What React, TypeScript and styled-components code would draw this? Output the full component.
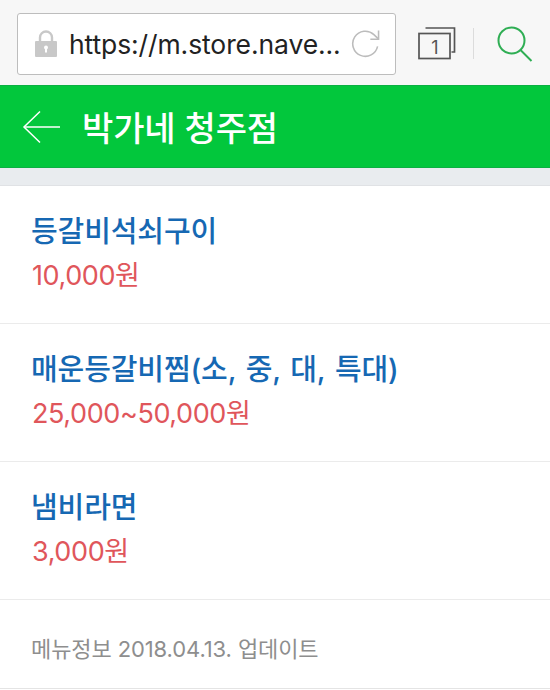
import React from "react";
import styled, { createGlobalStyle } from "styled-components";

const GlobalStyle = createGlobalStyle`
  html, body {
    margin: 0;
    padding: 0;
    background: #fff;
    overflow: hidden;
  }
  * {
    box-sizing: border-box;
  }
`;

const Page = styled.div`
  width: 550px;
  height: 690px;
  overflow: hidden;
  font-family: Inter, "Noto Sans CJK KR", sans-serif;
`;

const Toolbar = styled.div`
  display: flex;
  align-items: center;
  height: 85px;
  padding: 2px 0 0 17px;
  background: #f7f7f7;
`;

const AddressBar = styled.div`
  display: flex;
  flex-shrink: 0;
  align-items: center;
  width: 379px;
  height: 62px;
  padding: 0 15px 0 17px;
  background: #fff;
  border: 1px solid #bdbdbd;
  border-radius: 3px;
`;

const Url = styled.div`
  flex: 1;
  margin-left: 12px;
  font-size: 26.5px;
  letter-spacing: -0.1px;
  color: #222;
  white-space: nowrap;
`;

const ToolIcons = styled.div`
  display: flex;
  flex-shrink: 0;
  align-items: center;
  margin-left: 22px;
`;

const Divider = styled.div`
  width: 1px;
  height: 31px;
  margin: 0 23px 0 17px;
  background: #dcdcdc;
`;

const Header = styled.header`
  display: flex;
  align-items: center;
  height: 83px;
  padding: 0 22px;
  background: #02c73c;
  border-top: 1px solid #0bb043;
  border-bottom: 1px solid #0bb043;
`;

const Title = styled.h1`
  margin: 0 0 0 22px;
  font-size: 34px;
  font-weight: 500;
  letter-spacing: -0.1px;
  color: #fff;
`;

const Gap = styled.div`
  height: 18px;
  background: #e9ecef;
  border-bottom: 1px solid #e0e2e5;
`;

const MenuList = styled.ul`
  margin: 0;
  padding: 0;
  list-style: none;
`;

const MenuRow = styled.li`
  display: flex;
  flex-direction: column;
  justify-content: center;
  height: 138px;
  padding: 0 31px 1px;
  border-bottom: 1px solid #ebebeb;
`;

const MenuName = styled.div`
  font-size: 29px;
  font-weight: 500;
  line-height: 44px;
  letter-spacing: -0.1px;
  word-spacing: 2px;
  color: #1668b3;
`;

const MenuPrice = styled.div`
  margin-left: 1px;
  font-size: 27px;
  line-height: 44px;
  letter-spacing: -0.4px;
  color: #e0565b;
`;

const Footer = styled.div`
  height: 89px;
  padding: 33px 31px 0;
  font-size: 22px;
  line-height: 32px;
  letter-spacing: -0.1px;
  color: #8e8e8e;
  border-bottom: 1px solid #e4e4e4;
`;

const LockIcon = () => (
  <svg width="22" height="27" viewBox="0 0 22 27">
    <path d="M5 12V7.500a6 6 0 0 1 12 0V12" fill="none" stroke="#c8c8c8" strokeWidth="2.400" />
    <path d="M1 11h20a1 1 0 0 1 1 1v14a1 1 0 0 1-1 1H1a1 1 0 0 1-1-1V12a1 1 0 0 1 1-1z" fill="#c8c8c8" />
    <circle cx="11" cy="17.500" r="2" fill="#fff" />
    <rect x="10" y="18" width="2" height="4.500" fill="#fff" />
  </svg>
);

const ReloadIcon = () => (
  <svg width="29" height="29" viewBox="0 0 30 30" fill="none" stroke="#bcbcbc" strokeWidth="1.600">
    <path d="M27.500 18a13 13 0 1 1-3.800-12.200L28 10" />
    <path d="M28.500 1.500V10.500H20" />
  </svg>
);

const TabsIcon = () => (
  <svg width="38" height="33" viewBox="0 0 38 33" fill="none" stroke="#555" strokeWidth="1.700">
    <path d="M7.500 1h29v24h-3" />
    <rect x="1" y="6.500" width="31" height="25" />
    <text x="17" y="27" textAnchor="middle" fontFamily="Inter, sans-serif" fontSize="18" fill="#555" stroke="none">1</text>
  </svg>
);

const SearchIcon = () => (
  <svg width="36" height="36" viewBox="0 0 36 36" fill="none" stroke="#2fae54" strokeWidth="2">
    <circle cx="14.500" cy="14.500" r="13" />
    <path d="M23.500 24l11 11" />
  </svg>
);

const BackIcon = () => (
  <svg width="38" height="34" viewBox="0 0 38 34" fill="none" stroke="#fff" strokeWidth="1.500">
    <path d="M38 17H2" />
    <path d="M18 1.500L2 17l16 15.500" />
  </svg>
);

const menus = [
  { name: "등갈비석쇠구이", price: "10,000원" },
  { name: "매운등갈비찜(소, 중, 대, 특대)", price: "25,000~50,000원" },
  { name: "냄비라면", price: "3,000원" },
];

export default function App() {
  return (
    <Page>
      <GlobalStyle />
      <Toolbar>
        <AddressBar>
          <LockIcon />
          <Url>https://m.store.nave...</Url>
          <ReloadIcon />
        </AddressBar>
        <ToolIcons>
          <TabsIcon />
          <Divider />
          <SearchIcon />
        </ToolIcons>
      </Toolbar>
      <Header>
        <BackIcon />
        <Title>박가네 청주점</Title>
      </Header>
      <Gap />
      <MenuList>
        {menus.map((menu) => (
          <MenuRow key={menu.name}>
            <MenuName>{menu.name}</MenuName>
            <MenuPrice>{menu.price}</MenuPrice>
          </MenuRow>
        ))}
      </MenuList>
      <Footer>메뉴정보 2018.04.13. 업데이트</Footer>
    </Page>
  );
}
